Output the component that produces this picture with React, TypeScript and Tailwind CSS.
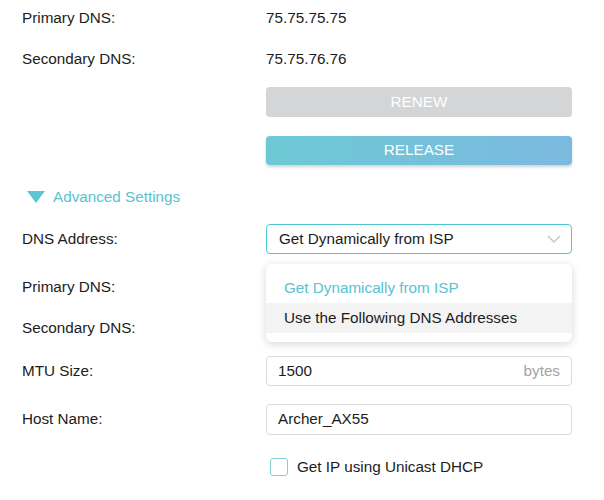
import React from "react";

const font = { fontFamily: '"Liberation Sans", Arial, Helvetica, sans-serif' };

function Row({ label, children, className = "" }: { label?: string; children?: React.ReactNode; className?: string }) {
  return (
    <div className={"flex items-center h-[30px] " + className}>
      <div className="w-[244px] shrink-0 text-[#1c1c1c]">{label}</div>
      <div className="w-[306px] relative h-full flex items-center">{children}</div>
    </div>
  );
}

export default function App() {
  return (
    <div className="w-[604px] h-[500px] bg-white overflow-hidden text-[15.25px] leading-[20px]" style={font}>
      <div className="flex flex-col pl-[22px] pt-[3px]">
        <Row label="Primary DNS:">
          <span className="text-[#1c1c1c]">75.75.75.75</span>
        </Row>
        <Row label="Secondary DNS:" className="mt-[11px]">
          <span className="text-[#1c1c1c]">75.75.76.76</span>
        </Row>
        <Row className="mt-[13px]">
          <div className="w-full h-[30px] rounded-[4px] bg-[#d4d5d7] text-white flex items-center justify-center">RENEW</div>
        </Row>
        <Row className="mt-[18px]">
          <div className="w-full h-[29px] rounded-[4px] bg-gradient-to-r from-[#6cc9d4] to-[#7cb9e0] text-white flex items-center justify-center shadow-[0_2px_3px_rgba(0,0,0,0.18)]">RELEASE</div>
        </Row>
        <div className="mt-[22px] h-[20px] flex items-center pl-[5px] text-[#5ac2d0]">
          <svg width="18" height="12" viewBox="0 0 18 12" className="shrink-0">
            <polygon points="0,0 18,0 9,12" fill="#5ec5d3" />
          </svg>
          <span className="ml-[8px]">Advanced Settings</span>
        </div>
        <Row label="DNS Address:" className="mt-[17px]">
          <div className="w-full h-[30px] rounded-[4px] border border-[#50c6d3] flex items-center pl-[12px] pr-[10px] text-[#1c1c1c]">
            <span className="flex-1">Get Dynamically from ISP</span>
            <svg width="14" height="8" viewBox="0 0 14 8" className="shrink-0">
              <polyline points="1,1 7,7 13,1" fill="none" stroke="#c4c4c4" strokeWidth="1.4" />
            </svg>
          </div>
          <div className="absolute left-0 top-[40px] w-full z-10 bg-white rounded-[6px] shadow-[0_2px_8px_rgba(0,0,0,0.16)] py-[9px]">
            <div className="h-[30px] flex items-center pl-[18px] text-[#5ac2d0]">Get Dynamically from ISP</div>
            <div className="h-[30px] flex items-center pl-[18px] bg-[#f3f3f3] text-[#1c1c1c]">Use the Following DNS Addresses</div>
          </div>
        </Row>
        <Row label="Primary DNS:" className="mt-[18px]" />
        <Row label="Secondary DNS:" className="mt-[11px]" />
        <Row label="MTU Size:" className="mt-[13px]">
          <div className="w-full h-[30px] rounded-[4px] border border-[#dadada] flex items-center pl-[11px] pr-[11px] text-[#1c1c1c]">
            <span className="flex-1">1500</span>
            <span className="text-[#a3a3a3]">bytes</span>
          </div>
        </Row>
        <Row label="Host Name:" className="mt-[18px]">
          <div className="w-full h-[31px] rounded-[4px] border border-[#dadada] flex items-center pl-[11px] text-[#1c1c1c]">
            Archer_AX55
          </div>
        </Row>
        <Row className="mt-[18px]">
          <div className="flex items-center pl-[4px]">
            <div className="w-[18px] h-[18px] rounded-[3px] border-[1.5px] border-[#80d0da] bg-white shrink-0" />
            <span className="ml-[9px] text-[#1c1c1c]">Get IP using Unicast DHCP</span>
          </div>
        </Row>
      </div>
    </div>
  );
}
